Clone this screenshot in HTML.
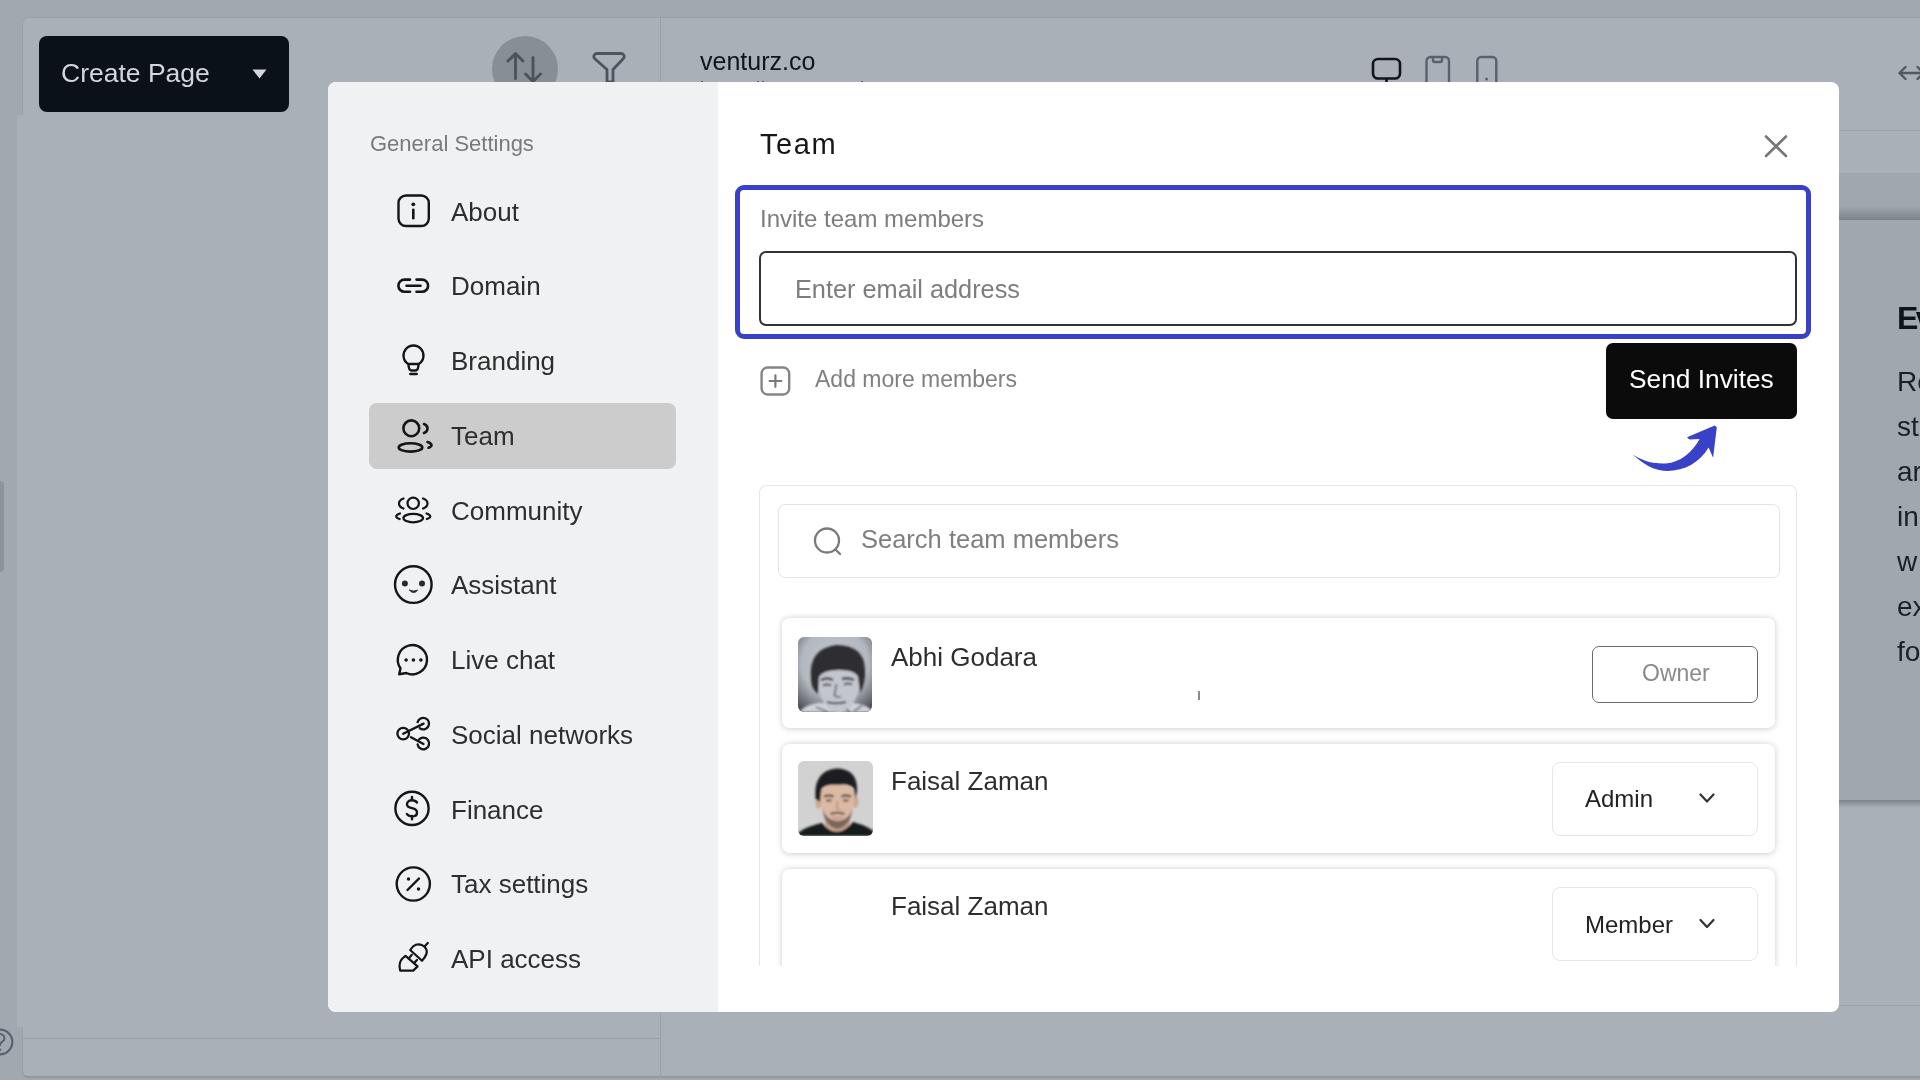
<!DOCTYPE html>
<html><head><meta charset="utf-8"><style>
html,body{margin:0;padding:0;width:1920px;height:1080px;overflow:hidden;font-family:"Liberation Sans", sans-serif;-webkit-font-smoothing:antialiased;}
body>div{will-change:transform}
</style></head><body>
<div style="position:absolute;left:0px;top:0px;width:1920px;height:1080px;background:#a1a8b0"></div>
<div style="position:absolute;left:22px;top:17px;width:1920px;height:1061px;background:#a9b0b8;border-top:1px solid #9aa1a9;border-left:1px solid #9aa1a9;border-bottom:2px solid #9299a1;border-radius:6px 0 0 6px;box-sizing:border-box"></div>
<div style="position:absolute;left:17px;top:115px;width:643px;height:912px;background:#a9b0b8"></div>
<div style="position:absolute;left:22px;top:1027px;width:638px;height:51px;border-left:1px solid #9aa1a9;border-bottom-left-radius:6px"></div>
<div style="position:absolute;left:22px;top:1038px;width:638px;height:1px;background:#9aa1a9"></div>
<div style="position:absolute;left:660px;top:17px;width:1px;height:1061px;background:#9aa1a9"></div>
<div style="position:absolute;left:0px;top:481px;width:4px;height:91px;background:#8c939b;border-radius:0 6px 6px 0"></div>
<div style="position:absolute;left:39px;top:36px;width:250px;height:76px;background:#0b1118;border-radius:8px"></div>
<div style="position:absolute;left:61px;top:60.07px;font-size:26.5px;line-height:26.5px;color:#d3d7dc;white-space:nowrap;">Create Page</div>
<div style="position:absolute;left:492px;top:36px;width:66px;height:66px;background:#878e96;border-radius:50%"></div>
<div style="position:absolute;left:661px;top:130px;width:1259px;height:1px;background:#9aa1a9"></div>
<div style="position:absolute;left:661px;top:173px;width:1259px;height:47px;background:linear-gradient(#a0a7af 0, #a0a7af 70%, #7c838b 100%)"></div>
<div style="position:absolute;left:1838px;top:220px;width:82px;height:580px;background:#a0a7af"></div>
<div style="position:absolute;left:1838px;top:800px;width:82px;height:8px;background:linear-gradient(#7c838b, #a9b0b8)"></div>
<div style="position:absolute;left:1838px;top:1005px;width:82px;height:1px;background:#9aa1a9"></div>
<div style="position:absolute;left:699.5px;top:48.94px;font-size:25px;line-height:25px;color:#10161d;white-space:nowrap;">venturz.co</div>
<div style="position:absolute;left:701px;top:81px;width:1.5px;height:1.5px;background:#5a6068"></div>
<div style="position:absolute;left:757px;top:81px;width:1.5px;height:1.5px;background:#5a6068"></div>
<div style="position:absolute;left:762px;top:81px;width:1.5px;height:1.5px;background:#5a6068"></div>
<div style="position:absolute;left:861px;top:81px;width:1.5px;height:1.5px;background:#5a6068"></div>
<div style="position:absolute;left:1897px;top:301.71px;font-size:32px;line-height:32px;color:#0e141b;white-space:nowrap;font-weight:bold;letter-spacing:-2.5px">Ev</div>
<div style="position:absolute;left:1897px;top:367.60px;font-size:28px;line-height:28px;color:#1a2028;white-space:nowrap;">Re</div>
<div style="position:absolute;left:1897px;top:412.70px;font-size:28px;line-height:28px;color:#1a2028;white-space:nowrap;">st</div>
<div style="position:absolute;left:1897px;top:457.80px;font-size:28px;line-height:28px;color:#1a2028;white-space:nowrap;">ar</div>
<div style="position:absolute;left:1897px;top:502.90px;font-size:28px;line-height:28px;color:#1a2028;white-space:nowrap;">in</div>
<div style="position:absolute;left:1897px;top:548.00px;font-size:28px;line-height:28px;color:#1a2028;white-space:nowrap;">w</div>
<div style="position:absolute;left:1897px;top:593.10px;font-size:28px;line-height:28px;color:#1a2028;white-space:nowrap;">ex</div>
<div style="position:absolute;left:1897px;top:638.20px;font-size:28px;line-height:28px;color:#1a2028;white-space:nowrap;">fo</div>
<svg style="position:absolute;left:0;top:0" width="1920" height="1080" fill="none" stroke-linecap="round" stroke-linejoin="round">
<g stroke="#4d545c" stroke-width="3">
<path d="M515.5 78.5V53.5M508 61l7.5-7.5 7.5 7.5"/>
<path d="M533 57.5V81M525.5 74l7.5 7.5 7.5-7.5"/>
<path d="M597 53.5h24a3 3 0 0 1 2.2 5.2L613 69.5v12.5h-6V69.5L594.8 58.7A3 3 0 0 1 597 53.5z" stroke-width="2.8"/>
</g>
<rect x="1373" y="59" width="27" height="19.5" rx="5" stroke="#10151c" stroke-width="2.6"/>
<path d="M1386.5 79v4" stroke="#10151c" stroke-width="2.6"/>
<path d="M1426.5 84V61a4 4 0 0 1 4-4h14.5a4 4 0 0 1 4 4v23M1433 57.5v2.5a2 2 0 0 0 2 2h5a2 2 0 0 0 2-2v-2.5" stroke="#5a616a" stroke-width="2.4"/>
<path d="M1477.3 84V61a4 4 0 0 1 4-4h11a4 4 0 0 1 4 4v23" stroke="#5a616a" stroke-width="2.4"/>
<circle cx="1486.5" cy="79" r="1.5" fill="#5a616a"/>
<path d="M1899.5 73h22M1905.5 67l-6 6 6 6M1917.5 67l6 6-6 6" stroke="#525961" stroke-width="2.4"/>
<circle cx="0" cy="1042" r="12.3" stroke="#5a616a" stroke-width="2.2"/>
<path d="M-4.5 1038.5a4.5 4.5 0 0 1 9 0c0 3-4.5 3.2-4.5 6.8" stroke="#5a616a" stroke-width="2"/><circle cx="0" cy="1049.8" r="1.3" fill="#5a616a"/>
</svg>
<svg style="position:absolute;left:252px;top:69px" width="15" height="10"><path d="M0.5 0.5h14l-7 9z" fill="#d3d7dc"/></svg>
<div style="position:absolute;left:328px;top:82px;width:1511px;height:930px;background:#fff;border-radius:8px;overflow:hidden"></div>
<div style="position:absolute;left:328px;top:82px;width:390px;height:930px;background:#f0f1f3;border-radius:8px 0 0 8px"></div>
<div style="position:absolute;left:370px;top:132.68px;font-size:22px;line-height:22px;color:#7a7a7a;white-space:nowrap;">General Settings</div>
<div style="position:absolute;left:369px;top:403px;width:307px;height:66px;background:#cccccc;border-radius:8px"></div>
<div style="position:absolute;left:451px;top:198.59px;font-size:26px;line-height:26px;color:#2e2e2e;white-space:nowrap;">About</div>
<div style="position:absolute;left:451px;top:273.34px;font-size:26px;line-height:26px;color:#2e2e2e;white-space:nowrap;">Domain</div>
<div style="position:absolute;left:451px;top:348.09px;font-size:26px;line-height:26px;color:#2e2e2e;white-space:nowrap;">Branding</div>
<div style="position:absolute;left:451px;top:422.84px;font-size:26px;line-height:26px;color:#2e2e2e;white-space:nowrap;">Team</div>
<div style="position:absolute;left:451px;top:497.59px;font-size:26px;line-height:26px;color:#2e2e2e;white-space:nowrap;">Community</div>
<div style="position:absolute;left:451px;top:572.34px;font-size:26px;line-height:26px;color:#2e2e2e;white-space:nowrap;">Assistant</div>
<div style="position:absolute;left:451px;top:647.09px;font-size:26px;line-height:26px;color:#2e2e2e;white-space:nowrap;">Live chat</div>
<div style="position:absolute;left:451px;top:721.84px;font-size:26px;line-height:26px;color:#2e2e2e;white-space:nowrap;">Social networks</div>
<div style="position:absolute;left:451px;top:796.59px;font-size:26px;line-height:26px;color:#2e2e2e;white-space:nowrap;">Finance</div>
<div style="position:absolute;left:451px;top:871.34px;font-size:26px;line-height:26px;color:#2e2e2e;white-space:nowrap;">Tax settings</div>
<div style="position:absolute;left:451px;top:946.09px;font-size:26px;line-height:26px;color:#2e2e2e;white-space:nowrap;">API access</div>
<div style="position:absolute;left:760px;top:129.85px;font-size:29px;line-height:29px;color:#161616;white-space:nowrap;letter-spacing:1.6px">Team</div>
<div style="position:absolute;left:735px;top:185px;width:1076px;height:154px;border:5px solid #3a41c9;border-radius:9px;box-sizing:border-box"></div>
<div style="position:absolute;left:760px;top:206.68px;font-size:24px;line-height:24px;color:#7d7d7d;white-space:nowrap;">Invite team members</div>
<div style="position:absolute;left:759px;top:251px;width:1038px;height:75px;border:2px solid #333;border-radius:7px;box-sizing:border-box"></div>
<div style="position:absolute;left:795px;top:276.68px;font-size:25.3px;line-height:25.3px;color:#7d7d7d;white-space:nowrap;">Enter email address</div>
<div style="position:absolute;left:814.5px;top:368.33px;font-size:23px;line-height:23px;color:#808080;white-space:nowrap;">Add more members</div>
<div style="position:absolute;left:1606px;top:343px;width:191px;height:76px;background:#0b0b0b;border-radius:7px"></div>
<div style="position:absolute;left:1629px;top:366.44px;font-size:26.3px;line-height:26.3px;color:#ffffff;white-space:nowrap;">Send Invites</div>
<div style="position:absolute;left:759px;top:485px;width:1038px;height:481px;border:1.5px solid #e6e6e6;border-bottom:none;border-radius:7px 7px 0 0;box-sizing:border-box"></div>
<div style="position:absolute;left:778px;top:504px;width:1002px;height:74px;border:1.5px solid #e3e3e3;border-radius:7px;box-sizing:border-box"></div>
<div style="position:absolute;left:860.5px;top:527.41px;font-size:25.5px;line-height:25.5px;color:#7f7f7f;white-space:nowrap;">Search team members</div>
<div style="position:absolute;left:782px;top:618px;width:993px;height:110px;background:#fff;border-radius:8px;box-shadow:0 0.5px 6px rgba(0,0,0,0.2)"></div>
<div style="position:absolute;left:782px;top:744px;width:993px;height:109px;background:#fff;border-radius:8px;box-shadow:0 0.5px 6px rgba(0,0,0,0.2)"></div>
<div style="position:absolute;left:782px;top:869px;width:993px;height:231px;background:#fff;border-radius:8px;box-shadow:0 0.5px 6px rgba(0,0,0,0.2);clip-path:inset(-10px -10px 134px -10px)"></div>
<div style="position:absolute;left:890.5px;top:643.99px;font-size:26px;line-height:26px;color:#2e2e2e;white-space:nowrap;">Abhi Godara</div>
<div style="position:absolute;left:890.5px;top:768.19px;font-size:26px;line-height:26px;color:#2e2e2e;white-space:nowrap;">Faisal Zaman</div>
<div style="position:absolute;left:890.5px;top:893.19px;font-size:26px;line-height:26px;color:#2e2e2e;white-space:nowrap;">Faisal Zaman</div>
<div style="position:absolute;left:1198px;top:691px;width:1.5px;height:9px;background:#8a8a8a"></div>
<div style="position:absolute;left:1591.5px;top:645.5px;width:166px;height:57px;border:1.5px solid #6a6a6a;border-radius:7px;box-sizing:border-box"></div>
<div style="position:absolute;left:1641.5px;top:662.03px;font-size:23px;line-height:23px;color:#8a8a8a;white-space:nowrap;">Owner</div>
<div style="position:absolute;left:1551.5px;top:761.5px;width:206px;height:74px;border:1.5px solid #e6e6e6;border-radius:8px;box-sizing:border-box"></div>
<div style="position:absolute;left:1585px;top:787.48px;font-size:24px;line-height:24px;color:#222;white-space:nowrap;">Admin</div>
<div style="position:absolute;left:1551.5px;top:887px;width:206px;height:74px;border:1.5px solid #e6e6e6;border-radius:8px;box-sizing:border-box"></div>
<div style="position:absolute;left:1585px;top:912.98px;font-size:24px;line-height:24px;color:#222;white-space:nowrap;">Member</div>
<svg style="position:absolute;left:798px;top:636.5px" width="74" height="75" viewBox="0 0 74 75">
<defs><radialGradient id="g1" cx="50%" cy="35%" r="75%"><stop offset="0" stop-color="#c4c8d0"/><stop offset="0.6" stop-color="#b3b7bf"/><stop offset="1" stop-color="#4f5358"/></radialGradient>
<clipPath id="c1"><rect width="74" height="75" rx="6"/></clipPath><filter id="b1"><feGaussianBlur stdDeviation="1"/></filter></defs>
<g clip-path="url(#c1)">
<rect width="74" height="75" fill="url(#g1)"/>
<g filter="url(#b1)">
<path d="M2 75Q6 68 20 66L56 66Q70 68 74 74V75Z" fill="#cfd2d8"/>
<path d="M20 36Q19 70 41 77Q62 70 63 36Q42 30 20 36Z" fill="#c3c6ce"/>
<path d="M13 42Q10 12 38 8Q66 8 67 32Q68 46 62 56L60 40Q57 33 41 33Q25 33 21 40L20 57Q13 52 13 42Z" fill="#2d2f33"/>
<path d="M23 43Q29 40 35 43M44 42Q50 40 56 43" stroke="#34363a" stroke-width="2.4" fill="none"/>
<path d="M25 48.5Q29 46.5 33 48.5M46 47.5Q50 45.5 54 47.5" stroke="#4b4d52" stroke-width="2.2" fill="none"/>
<path d="M38.5 47L36.5 58.5Q39.5 61 43 59.5" stroke="#6a6d72" stroke-width="1.8" fill="none"/>
<path d="M29 65Q38 67.5 48 65" stroke="#45474b" stroke-width="2" fill="none"/>
<path d="M18 70L30 75M56 74L64 69M48 72L52 75" stroke="#6a6d72" stroke-width="1.8"/>
</g></g></svg>
<svg style="position:absolute;left:798px;top:760.5px" width="75" height="75" viewBox="0 0 75 75">
<defs><clipPath id="c2"><rect width="75" height="75" rx="6"/></clipPath><filter id="b2"><feGaussianBlur stdDeviation="0.9"/></filter></defs>
<g clip-path="url(#c2)">
<rect width="75" height="75" fill="#d2d2d2"/>
<g filter="url(#b2)">
<path d="M27 56H52V75H27Z" fill="#c8a48e"/>
<path d="M-2 75Q2 67 24 62Q39 80 55 61Q73 66 77 72V75Z" fill="#151a1f"/>
<ellipse cx="20.5" cy="42" rx="3" ry="6" fill="#cfa890"/><ellipse cx="57.5" cy="41" rx="3" ry="6" fill="#cfa890"/>
<path d="M22.5 30Q22 62 39.5 68Q56 62 56.5 30Q50 22 39.5 23Q28 22 22.5 30Z" fill="#dbb9a3"/>
<path d="M24.5 48Q27 66 39.5 68Q52 66 54.5 48Q51 59 39.5 60Q28 59 24.5 48Z" fill="#7a665a"/>
<path d="M32.5 53Q39.5 50.5 46.5 53" stroke="#5e4c42" stroke-width="2.2" fill="none"/>
<path d="M34 56q5.5 1.8 11 0" stroke="#c08f88" stroke-width="1.8" fill="none"/>
<path d="M17.5 38Q15 10 38 7.5Q60 7.5 59 30L57.5 38L55.5 27Q50 22 39.5 24Q28 23 23.5 28L22 41Z" fill="#1b1f24"/>
<path d="M26 35.5Q31 33.5 35.5 35.5M43.5 35.5Q48 33.5 53 35.5" stroke="#3d332c" stroke-width="2" fill="none"/>
<path d="M28 39.5h5.5M45 39.5h5.5" stroke="#5d4a40" stroke-width="2"/>
<path d="M39.5 40L38.5 47.5Q40 48.5 42 47.5" stroke="#b89078" stroke-width="1.5" fill="none"/>
</g></g></svg>
<svg style="position:absolute;left:0;top:0" width="1920" height="1080" fill="none" stroke-linecap="round" stroke-linejoin="round">
<g stroke="#151515" stroke-width="2.6">
<rect x="398.5" y="195.5" width="30.3" height="30.5" rx="7.5" stroke-width="2.4"/>
<path d="M413.3 209.8v8.5"/>
<path d="M410 279.6h-5.5a6.1 6.1 0 0 0 0 12.2h5.5M416.5 279.6h5.5a6.1 6.1 0 0 1 0 12.2h-5.5M406.5 285.7h14"/>
<path d="M408.2 364A10 10 0 1 1 418.8 364ZM408.2 364l0.8 4q0.5 2.5 3 2.5h3q2.5 0 3-2.5l0.8-4" stroke-width="2.3"/>
<path d="M410.2 374h6.6" stroke-width="2.3"/>
<circle cx="411.3" cy="428.3" r="7.9"/>
<ellipse cx="410.5" cy="447.4" rx="11.8" ry="4.2"/>
<path d="M424 424c2.5 1 3.5 3 3.5 4.5s-1 3.5-3.5 4.5M427.5 442c2.5.8 4 2.2 4 3.2s-1 1.8-3 2.5"/>
<circle cx="413.2" cy="503.3" r="5.7" stroke-width="2.2"/>
<ellipse cx="413.2" cy="518.1" rx="9.8" ry="4.2" stroke-width="2.2"/>
<path d="M403.5 498.5c-3 1-4.5 3.5-4.5 5s1.5 4 4.5 5M423 498.5c3 1 4.5 3.5 4.5 5s-1.5 4-4.5 5M400 513.5c-2.5.8-3.8 2-3.8 3s1.3 1.8 3.5 2.5M426.5 513.5c2.5.8 3.8 2 3.8 3s-1.3 1.8-3.5 2.5" stroke-width="2.2"/>
<circle cx="413.3" cy="584.6" r="18.3" stroke-width="2.4"/>
<path d="M409.6 590.2Q413.6 595 417.6 590.2Q413.6 592 409.6 590.2Z" fill="#2a2a2a" stroke="#2a2a2a" stroke-width="1"/>
<path d="M399.2 674.2l1.3-6a14.6 14.6 0 1 1 5.8 4.8z" stroke-width="2.4"/>
<circle cx="403.2" cy="733.6" r="5.8" stroke-width="2.3"/>
<path d="M417.6 722.2A5.8 5.8 0 1 1 419.8 728.3M419 739.6A5.8 5.8 0 1 1 417.6 744.5M403.2 733.8L423.6 723.6M411 737.3L423.5 744" stroke-width="2.3"/>
<circle cx="412" cy="808.4" r="16.6" stroke-width="2.4"/>
<path d="M417 802.5c-1-1.5-2.7-2.3-5-2.3-3 0-5 1.7-5 4s2 3.3 5 4 5 1.8 5 4.2-2 4-5 4c-2.5 0-4.2-1-5.2-2.5M412 797v3.2M412 816v3.2" stroke-width="2.4"/>
<circle cx="413.3" cy="884" r="16.6" stroke-width="2.4"/>
<path d="M407.5 890l11.5-11.5" stroke-width="2.4"/>
<path d="M410.2 950L422 960.8C426 956.5 427.8 953 426.3 949.2C424.5 945 419.5 943.6 415.8 944.8C413.5 945.6 411.8 947.6 410.2 950Z" stroke-width="2.2"/>
<path d="M424.8 946.2L427.8 943M409.5 957.6L411.8 954.8M414.6 962.4L417 960" stroke-width="2.2"/>
<path d="M405.5 955.8L417.6 966.4L413.2 970.6H400.2C399.2 966.5 399.5 961.5 402.2 958.8Z" stroke-width="2.2"/>
</g>
<g fill="#151515">
<circle cx="413.3" cy="204.3" r="1.9"/>
<circle cx="404.9" cy="583.6" r="3" fill="#2a2a2a"/><circle cx="422" cy="583.6" r="3" fill="#2a2a2a"/>
<circle cx="406.1" cy="660" r="1.8"/><circle cx="413.4" cy="660" r="1.8"/><circle cx="420.9" cy="660" r="1.8"/>
<circle cx="408.5" cy="879" r="1.7"/><circle cx="418.5" cy="889" r="1.7"/>
</g>
<path d="M1766 136.5l20 19.5M1786 136.5l-20 19.5" stroke="#777" stroke-width="2.6"/>
<rect x="761.6" y="367.5" width="27.6" height="27" rx="6" stroke="#858585" stroke-width="2.4"/>
<path d="M775.4 375.3v11.5M769.6 381h11.6" stroke="#7a7a7a" stroke-width="2.2"/>
<circle cx="827" cy="540.5" r="12" stroke="#7a7a7a" stroke-width="2.3"/>
<path d="M835.5 549.5l4.5 4.5" stroke="#7a7a7a" stroke-width="2.3"/>
<path d="M1700.5 794.5l6.5 7 6.5-7M1700.5 920l6.5 7 6.5-7" stroke="#333" stroke-width="2.2"/>
<path d="M1632.5 454.4C1645 462 1655 464 1666 463.5C1680 462.5 1692 453 1699.6 439.1L1689.4 439.4L1687 437.3L1714.7 425.5L1716.8 427.3L1713.1 457.7L1708.6 447.5C1700 462 1685 471 1667 471C1655 471 1645 465 1632.5 454.4Z" fill="#3a41c9" stroke="none"/>
</svg>
</body></html>
